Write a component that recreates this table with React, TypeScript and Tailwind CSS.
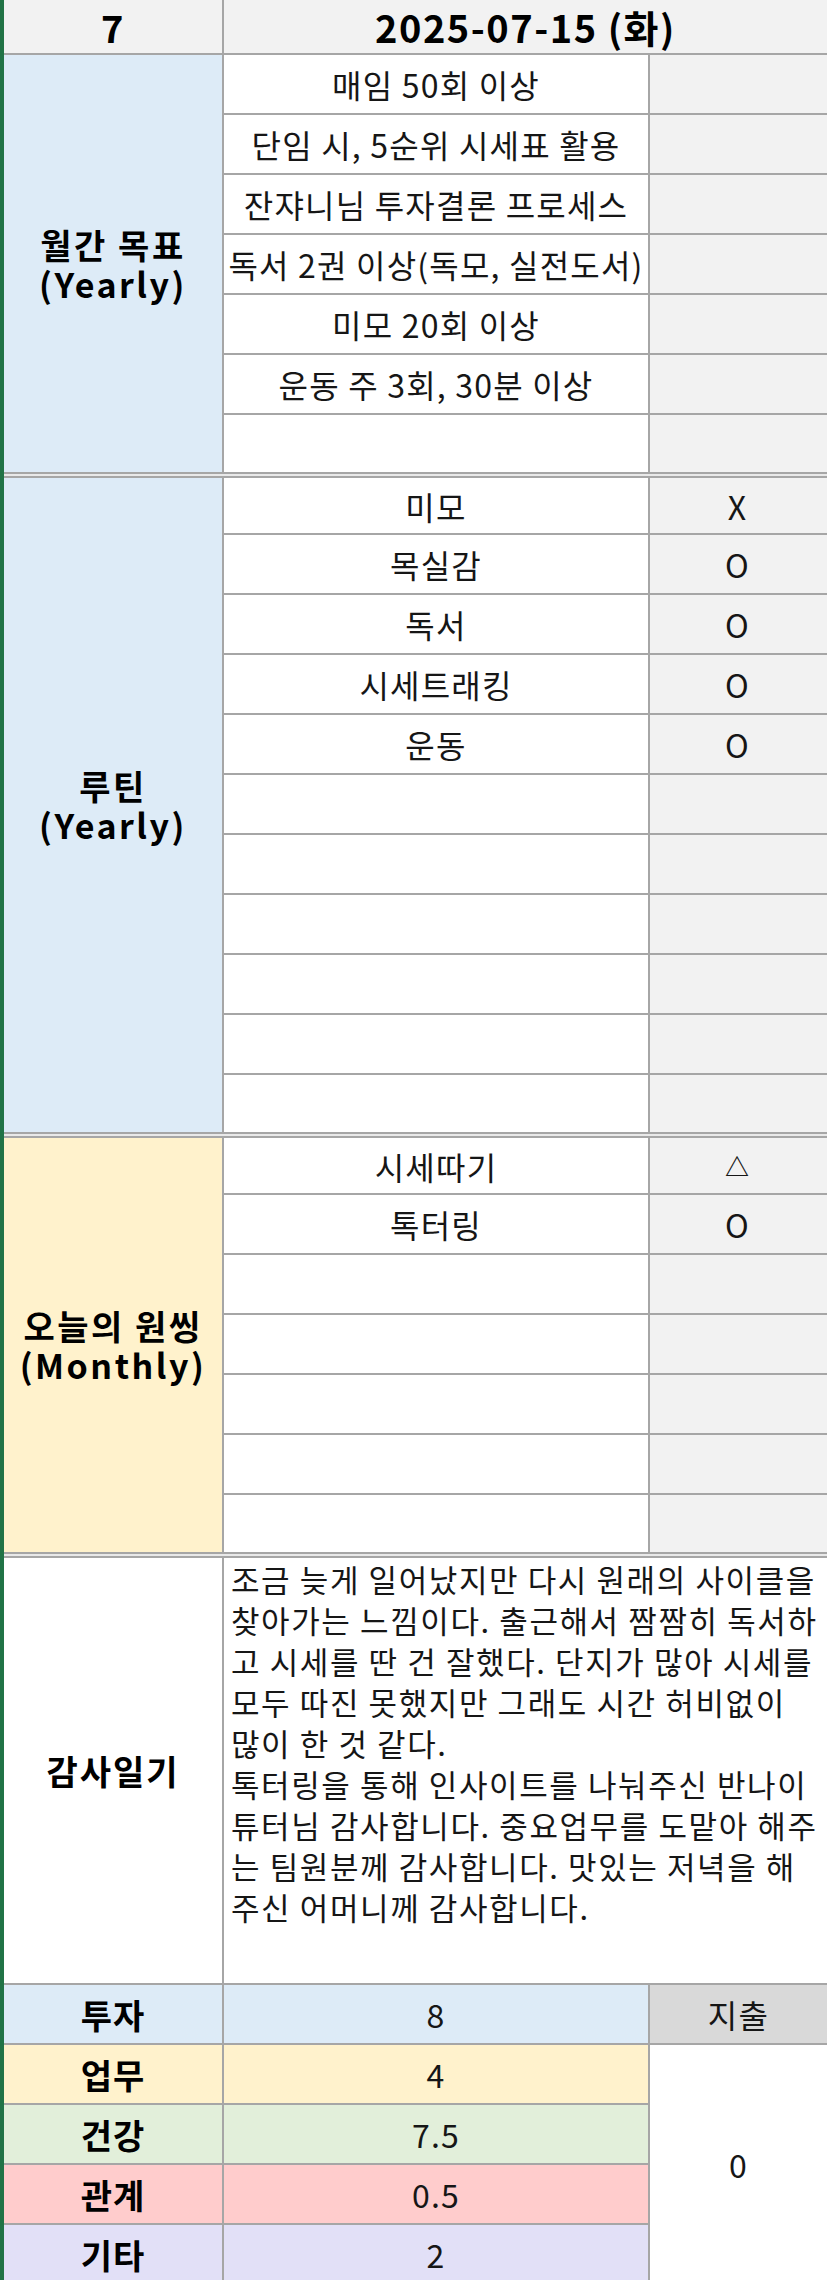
import React from "react";

type Row = { text: string; mark: string; h: string };

const goalRows: Row[] = [
  { text: "매임 50회 이상", mark: "", h: "h-[58px]" },
  { text: "단임 시, 5순위 시세표 활용", mark: "", h: "h-[58px]" },
  { text: "잔쟈니님 투자결론 프로세스", mark: "", h: "h-[58px]" },
  { text: "독서 2권 이상(독모, 실전도서)", mark: "", h: "h-[58px]" },
  { text: "미모 20회 이상", mark: "", h: "h-[58px]" },
  { text: "운동 주 3회, 30분 이상", mark: "", h: "h-[58px]" },
  { text: "", mark: "", h: "h-[57px]" },
];

const routineRows: Row[] = [
  { text: "미모", mark: "X", h: "h-[55px]" },
  { text: "목실감", mark: "O", h: "h-[58px]" },
  { text: "독서", mark: "O", h: "h-[58px]" },
  { text: "시세트래킹", mark: "O", h: "h-[58px]" },
  { text: "운동", mark: "O", h: "h-[58px]" },
  { text: "", mark: "", h: "h-[58px]" },
  { text: "", mark: "", h: "h-[58px]" },
  { text: "", mark: "", h: "h-[58px]" },
  { text: "", mark: "", h: "h-[58px]" },
  { text: "", mark: "", h: "h-[58px]" },
  { text: "", mark: "", h: "h-[57px]" },
];

const oneThingRows: Row[] = [
  { text: "시세따기", mark: "△", h: "h-[55px]" },
  { text: "톡터링", mark: "O", h: "h-[58px]" },
  { text: "", mark: "", h: "h-[58px]" },
  { text: "", mark: "", h: "h-[58px]" },
  { text: "", mark: "", h: "h-[58px]" },
  { text: "", mark: "", h: "h-[58px]" },
  { text: "", mark: "", h: "h-[57px]" },
];

const diary = [
  "조금 늦게 일어났지만 다시 원래의 사이클을",
  "찾아가는 느낌이다. 출근해서 짬짬히 독서하",
  "고 시세를 딴 건 잘했다. 단지가 많아 시세를",
  "모두 따진 못했지만 그래도 시간 허비없이",
  "많이 한 것 같다.",
  "톡터링을 통해 인사이트를 나눠주신 반나이",
  "튜터님 감사합니다. 중요업무를 도맡아 해주",
  "는 팀원분께 감사합니다. 맛있는 저녁을 해",
  "주신 어머니께 감사합니다.",
];

const scores = [
  { label: "투자", value: "8", bg: "bg-[#ddebf7]" },
  { label: "업무", value: "4", bg: "bg-[#fff2cc]" },
  { label: "건강", value: "7.5", bg: "bg-[#e2efda]" },
  { label: "관계", value: "0.5", bg: "bg-[#ffcccc]" },
  { label: "기타", value: "2", bg: "bg-[#e2e0f7]" },
];

function Mark(props: { v: string }) {
  if (props.v === "△") return <span className="text-[24px] font-semibold">△</span>;
  return <span>{props.v}</span>;
}

function Section(props: { title: string; sub: string; bg: string; rows: Row[] }) {
  return (
    <div className="flex gap-[2px] bg-[#a6a6a6]">
      <div className={`w-[218px] shrink-0 flex items-center justify-center text-center font-bold text-[34px] leading-[39px] tracking-[2.5px] text-black ${props.bg}`}>
        <p>
          {props.title}
          <br />
          {props.sub}
        </p>
      </div>
      <div className="flex-1 flex flex-col gap-[2px]">
        {props.rows.map((r, i) => (
          <div key={i} className={`flex gap-[2px] ${r.h}`}>
            <div className="w-[424px] shrink-0 bg-white flex items-center justify-center whitespace-nowrap">{r.text}</div>
            <div className="flex-1 bg-[#f2f2f2] flex items-center justify-center pr-[2px]">
              <Mark v={r.mark} />
            </div>
          </div>
        ))}
      </div>
    </div>
  );
}

function Separator() {
  return <div className="h-[6px] border-y-2 border-[#a6a6a6] bg-[#e9e9e9]" />;
}

export default function App() {
  return (
    <div className="w-[827px] h-[2280px] overflow-hidden bg-white border-l-4 border-[#217346] font-['Noto_Sans_CJK_KR',sans-serif] text-[32px] tracking-[1.2px] text-[#161616]">
      <div className="flex h-[55px] border-b-2 border-[#a6a6a6] bg-[#f2f2f2] font-bold text-[38px] tracking-[1.5px] text-black">
        <div className="w-[218px] shrink-0 flex items-center justify-center">7</div>
        <div className="w-[2px] bg-[#a6a6a6]" />
        <div className="flex-1 flex items-center justify-center">2025-07-15 (화)</div>
      </div>

      <Section title="월간 목표" sub="(Yearly)" bg="bg-[#ddebf7]" rows={goalRows} />
      <Separator />
      <Section title="루틴" sub="(Yearly)" bg="bg-[#ddebf7]" rows={routineRows} />
      <Separator />
      <Section title="오늘의 원씽" sub="(Monthly)" bg="bg-[#fff2cc]" rows={oneThingRows} />
      <Separator />

      <div className="flex h-[427px] border-b-2 border-[#a6a6a6]">
        <div className="w-[218px] shrink-0 flex items-center justify-center font-bold text-[34px] tracking-[2px] text-black">감사일기</div>
        <div className="w-[2px] bg-[#a6a6a6]" />
        <div className="flex-1 pl-[7px] text-[31px] tracking-[1.6px] leading-[41px] whitespace-nowrap">
          {diary.map((line, i) => (
            <div key={i}>{line}</div>
          ))}
        </div>
      </div>

      <div className="flex gap-[2px] bg-[#a6a6a6]">
        <div className="w-[644px] shrink-0 flex flex-col gap-[2px]">
          {scores.map((s) => (
            <div key={s.label} className="flex gap-[2px] h-[58px]">
              <div className={`w-[218px] shrink-0 flex items-center justify-center font-bold text-[34px] tracking-[1px] text-black ${s.bg}`}>{s.label}</div>
              <div className={`flex-1 flex items-center justify-center ${s.bg}`}>{s.value}</div>
            </div>
          ))}
        </div>
        <div className="flex-1 flex flex-col gap-[2px]">
          <div className="h-[58px] bg-[#d9d9d9] flex items-center justify-center">지출</div>
          <div className="flex-1 bg-white flex items-center justify-center">0</div>
        </div>
      </div>
    </div>
  );
}
